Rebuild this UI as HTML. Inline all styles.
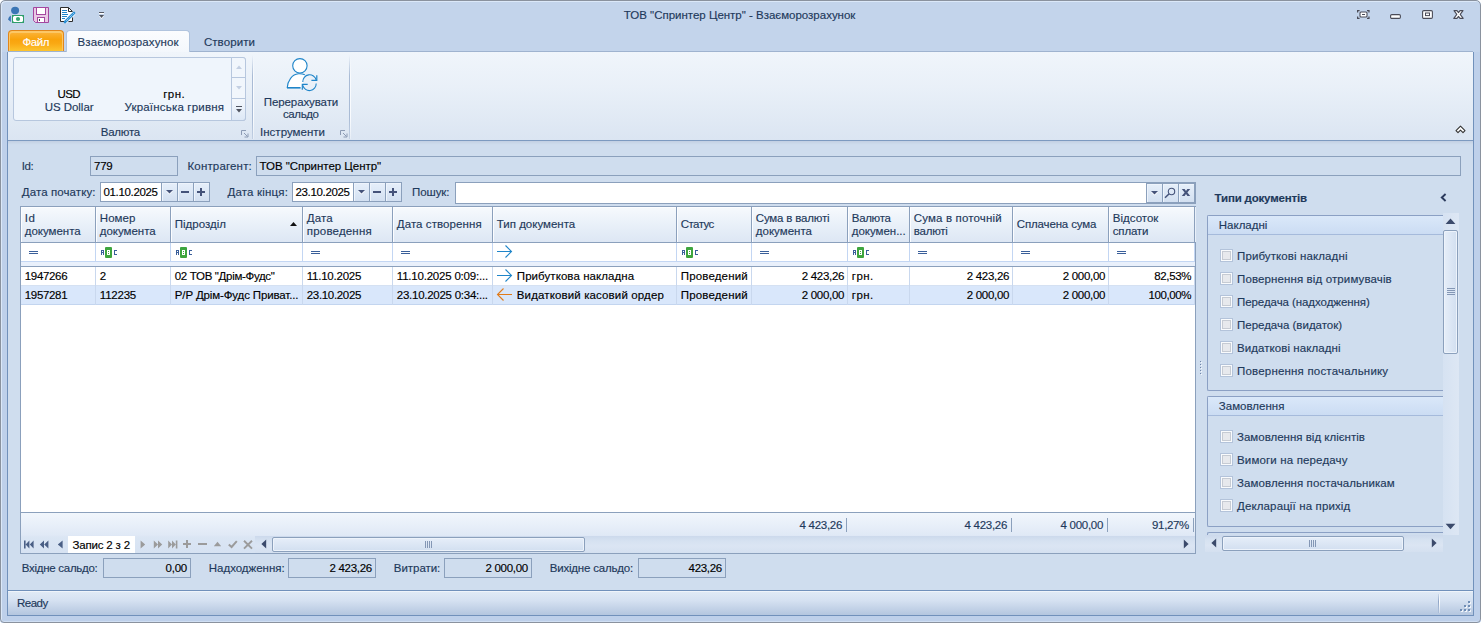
<!DOCTYPE html>
<html lang="uk">
<head>
<meta charset="utf-8">
<title>ТОВ "Спринтер Центр" - Взаєморозрахунок</title>
<style>
*{box-sizing:border-box;margin:0;padding:0}
html,body{width:1481px;height:623px;overflow:hidden;background:#fff}
body{font-family:"Liberation Sans",sans-serif;font-size:11.5px;color:#1e395b;position:relative;line-height:13px}
#win,#win div,#win svg{position:absolute}
#win svg{overflow:visible}
#win{left:0;top:0;width:1481px;height:623px;background:#c3d4eb;border-radius:5px 5px 4px 4px;overflow:hidden}
#frame{left:0;top:0;width:1481px;height:623px;border:1px solid #8a929e;border-radius:5px 5px 4px 4px;box-shadow:inset 1px 1px 0 #dbe8f8,inset 0 -1px 0 #d0dff3;z-index:50}
.t{white-space:nowrap;line-height:13px;-webkit-text-stroke:.15px currentColor}
.k{color:#000}
.b{font-weight:bold}
.box{border:1px solid #8ba0bc;background:#cfddee}
.inp{border:1px solid #8ba0bc;background:#fff}
.hd{background:linear-gradient(#f7fafd 0,#eaf1f9 45%,#dde7f4 100%);border-right:1px solid #8ba0bc;box-shadow:inset 1px 1px 0 #fcfdff}
.btn{background:linear-gradient(#e6effa,#d3e0f1);border-left:1px solid #8ba0bc;box-shadow:inset 1px 1px 0 #eef4fc}
.cb{width:13px;height:13px;border:1px solid #b3c3da;background:#e7e9ed;box-shadow:inset 0 0 0 1px #f9fbfd, inset 0 0 0 2px #c6cbd3}
.grp{border:1px solid #8ba0c4;background:#cfddee;border-radius:2px 0 0 2px}
.grph{background:linear-gradient(#dae8f9,#cbdcf3);border-bottom:1px solid #a5badb}
</style>
</head>
<body>
<div id="win">
<div class="t" style="top:9.0px;letter-spacing:-0.01px;left:623.8px;">ТОВ "Спринтер Центр" - Взаєморозрахунок</div>
<svg style="left:7px;top:6px;" width="18" height="18" viewBox="0 0 18 18"><ellipse cx="8.1" cy="4.5" rx="4" ry="3.7" fill="#3a75b5"/><path d="M3.9,9.6 V16 L1,13.4 Q1.6,10.6 3.9,9.6 Z" fill="#3a75b5"/><rect x="5.5" y="9.5" width="11" height="7" fill="#fff" stroke="#2e9e6b" stroke-width="1"/><path d="M5,9 h3 l-3,3z M17,9 h-3 l3,3z M5,17 h3 l-3,-3z M17,17 h-3 l3,-3z" fill="#2e9e6b"/><circle cx="11" cy="13" r="2.1" fill="#37a472"/></svg>
<svg style="left:33px;top:7px;" width="16" height="16" viewBox="0 0 16 16"><path d="M.5,.5 H15.5 V15.5 H2.5 L.5,13.5 Z" fill="#e9c9e5" stroke="#a4479f"/><rect x="3.5" y=".5" width="9" height="7" fill="#fff" stroke="#a4479f"/><rect x="4.5" y="10.5" width="7" height="5" fill="#fff" stroke="#a4479f"/><rect x="6" y="12" width="1" height="2" fill="#444"/></svg>
<svg style="left:60px;top:7px;" width="16" height="16" viewBox="0 0 16 16"><path d="M.5,.5 H8.5 L12.5,4.5 V14.5 H.5 Z" fill="#fff" stroke="#2d2d2d"/><path d="M8.5,.5 V4.5 H12.5" fill="none" stroke="#2d2d2d"/><path d="M2,3.5h5M2,5.5h5M2,7.5h6M2,9.5h5M2,11.5h3" stroke="#1f85c9" stroke-width="1"/><path d="M14,6 L5,15" stroke="#fff" stroke-width="4"/><path d="M14,6 L5,15" stroke="#2b8fd3" stroke-width="2.6" stroke-linecap="round"/><path d="M13.6,6.4 L6,14" stroke="#fff" stroke-width=".8" stroke-dasharray="1 1"/><path d="M4.2,15.8 l.4,-2 l1.6,1.6z" fill="#2b8fd3"/></svg>
<svg style="left:98px;top:11px;" width="8" height="9" viewBox="0 0 8 9"><path d="M1,2.5h5" stroke="#fff"/><path d="M1,1.5h5" stroke="#555a66"/><path d="M1,5 h5 l-2.5,3z" fill="#fff"/><path d="M1,4 h5 l-2.5,3z" fill="#4f5460"/></svg>
<svg style="left:1356px;top:9px;" width="15" height="11" viewBox="0 0 15 11"><path d="M1.6,3.6V1.6h2M11,1.6h2v2M13,7.4v2h-2M3.6,9.4h-2v-2" fill="none" stroke="#4a4b57" stroke-width="1.2"/><rect x="4" y="3" width="7" height="5" rx="1" fill="#fff" stroke="#4a4b57" stroke-width="1.1"/><path d="M6,5.5h3" stroke="#4a4b57" stroke-width="1"/></svg>
<svg style="left:1390px;top:14px;" width="11" height="5" viewBox="0 0 11 5"><rect x=".6" y=".6" width="9.8" height="3.8" rx="1.2" fill="#fff" stroke="#4a4b57" stroke-width="1.1"/></svg>
<svg style="left:1422px;top:10px;" width="11" height="9" viewBox="0 0 11 9"><rect x=".6" y=".6" width="9.8" height="7.8" rx="1.2" fill="#fff" stroke="#4a4b57" stroke-width="1.1"/><rect x="3.5" y="3" width="4" height="2.6" fill="#fff" stroke="#4a4b57" stroke-width="1"/></svg>
<svg style="left:1453px;top:10px;" width="11" height="9" viewBox="0 0 11 9"><path d="M1,.6 H4 L5.5,2.6 L7,.6 H10 L7.2,4.4 L10.2,8.4 H7 L5.5,6.4 L4,8.4 H.8 L3.8,4.4 Z" fill="#fff" stroke="#4a4b57" stroke-width="1.1" stroke-linejoin="round"/></svg>
<div style="left:8px;top:30px;width:56px;height:22px;border:1px solid #e1861a;border-bottom:none;border-radius:4px 4px 0 0;background:linear-gradient(#fbb540 0,#f9a30c 40%,#faa914 60%,#fdc832 100%);box-shadow:inset 0 1px 0 1px #fcc766"></div>
<div class="t" style="top:36.0px;letter-spacing:-0.40px;left:22.5px;color:#fff">Файл</div>
<div style="left:8px;top:51px;width:1465px;height:90px;border-top:1px solid #9fb3cf;border-bottom:1px solid #7d9ac0;background:linear-gradient(#f0f5fb 0,#e9f0f8 40%,#dbe5f2 100%)"></div>
<div style="left:66px;top:30px;width:124px;height:22px;border:1px solid #b1c4de;border-bottom:none;border-radius:4px 4px 0 0;background:linear-gradient(#fbfcfe,#f3f7fc)"></div>
<div class="t" style="top:36.0px;letter-spacing:0.09px;left:77.6px;">Взаєморозрахунок</div>
<div class="t" style="top:36.0px;letter-spacing:0.08px;left:203.9px;">Створити</div>
<div style="left:13px;top:57px;width:233px;height:64px;border:1px solid #b7c7de;border-radius:3px;background:#eff5fc"></div>
<div style="left:231px;top:57px;width:15px;height:64px;border:1px solid #b7c7de;border-radius:0 3px 3px 0;background:#f1f6fc"></div>
<div style="left:231px;top:77px;width:15px;height:1px;background:#b7c7de"></div>
<div style="left:231px;top:98px;width:15px;height:23px;border:1px solid #b7c7de;border-radius:0 0 3px 0;background:linear-gradient(#f4f8fd,#dde8f6)"></div>
<svg style="left:235px;top:64px;" width="8" height="6" viewBox="0 0 8 6"><path d="M1,5 h6 l-3,-3.5z" fill="#c3cfe2"/></svg>
<svg style="left:235px;top:85px;" width="8" height="6" viewBox="0 0 8 6"><path d="M1,1 h6 l-3,3.5z" fill="#c3cfe2"/></svg>
<svg style="left:235px;top:105px;" width="8" height="9" viewBox="0 0 8 9"><path d="M1,1.5h6" stroke="#4f5460"/><path d="M1,4 h6 l-3,3.5z" fill="#4f5460"/></svg>
<div class="t k" style="top:88.0px;letter-spacing:-0.60px;left:57.5px;">USD</div>
<div class="t" style="top:101.0px;letter-spacing:-0.04px;left:44.7px;">US Dollar</div>
<div class="t k" style="top:88.0px;letter-spacing:0.46px;left:163.2px;">грн.</div>
<div class="t" style="top:101.0px;letter-spacing:0.19px;left:124.5px;">Українська гривня</div>
<div class="t" style="top:126.0px;letter-spacing:-0.25px;left:100.8px;">Валюта</div>
<div style="left:252px;top:55px;width:1px;height:84px;background:linear-gradient(rgba(169,187,213,0),#a9bbd5 25%,#a9bbd5 75%,rgba(169,187,213,.5))"></div>
<div style="left:253px;top:55px;width:1px;height:84px;background:linear-gradient(rgba(255,255,255,0),#f9fbfe 25%,#f9fbfe 75%,rgba(255,255,255,.3))"></div>
<div style="left:349px;top:55px;width:1px;height:84px;background:linear-gradient(rgba(169,187,213,0),#a9bbd5 25%,#a9bbd5 75%,rgba(169,187,213,.5))"></div>
<div style="left:350px;top:55px;width:1px;height:84px;background:linear-gradient(rgba(255,255,255,0),#f9fbfe 25%,#f9fbfe 75%,rgba(255,255,255,.3))"></div>
<svg style="left:241px;top:130px;" width="8" height="8" viewBox="0 0 8 8"><path d="M.5,5V.5H5" fill="none" stroke="#8c9bb4"/><path d="M3,3 L6.5,6.5 M7,3.5 V7 H3.5" fill="none" stroke="#8c9bb4"/></svg>
<svg style="left:340px;top:130px;" width="8" height="8" viewBox="0 0 8 8"><path d="M.5,5V.5H5" fill="none" stroke="#8c9bb4"/><path d="M3,3 L6.5,6.5 M7,3.5 V7 H3.5" fill="none" stroke="#8c9bb4"/></svg>
<svg style="left:286px;top:58px;" width="32" height="32" viewBox="0 0 32 32"><path d="M1.2,30 C1.6,23 6,16.2 12.5,15.8 C15,15.6 17,16 18.8,16.8 L16,30 Z" fill="#fff"/><path d="M1.2,30 C1.6,23 6,16.2 12.5,15.8 C15,15.6 17,16 18.8,16.8" fill="none" stroke="#1f85c9" stroke-width="1.1"/><path d="M1,29.8 H14.6" stroke="#1f85c9" stroke-width="1.6"/><circle cx="13.9" cy="7.8" r="7.2" fill="#fff" stroke="#1f85c9" stroke-width="1.1"/><circle cx="23.5" cy="24.7" r="8.2" fill="#e6eef8" opacity=".0"/><path d="M16.8,24 A6.8,6.8 0 0 1 30.2,22" fill="none" stroke="#1f85c9" stroke-width="1.1"/><path d="M25.4,22.3 H30.8 V17.3" fill="none" stroke="#1f85c9" stroke-width="1.2"/><path d="M30.2,25.6 A6.8,6.8 0 0 1 16.8,27.4" fill="none" stroke="#1f85c9" stroke-width="1.1"/><path d="M21.7,26.4 H16.3 V31.8" fill="none" stroke="#1f85c9" stroke-width="1.2"/></svg>
<div class="t" style="top:96.0px;letter-spacing:-0.10px;left:263.8px;">Перерахувати</div>
<div class="t" style="top:108.0px;letter-spacing:-0.41px;left:283.0px;">сальдо</div>
<div class="t" style="top:126.0px;letter-spacing:0.02px;left:260.0px;">Інструменти</div>
<svg style="left:1455px;top:125px;" width="11" height="9" viewBox="0 0 11 9"><path d="M5.5,1.2 L10,5.6 L8,7.6 L5.5,5.2 L3,7.6 L1,5.6 Z" fill="#fff" stroke="#333" stroke-width="1.1" stroke-linejoin="round"/></svg>
<div style="left:8px;top:141px;width:1465px;height:449px;background:linear-gradient(#c2cfe2 0,#cddbec 3px,#cfddee 4px)"></div>
<div class="t" style="top:160.0px;letter-spacing:-0.47px;left:21.8px;">Id:</div>
<div class="box" style="left:90px;top:156px;width:88px;height:20px;"></div>
<div class="t k" style="top:160.0px;letter-spacing:-0.26px;left:94.0px;">779</div>
<div class="t" style="top:160.0px;letter-spacing:0.16px;left:187.5px;">Контрагент:</div>
<div class="box" style="left:256px;top:156px;width:1205px;height:20px;"></div>
<div class="t k" style="top:160.0px;letter-spacing:-0.03px;left:259.5px;">ТОВ "Спринтер Центр"</div>
<div class="t" style="top:186.0px;letter-spacing:0.10px;left:21.8px;">Дата початку:</div>
<div class="inp" style="left:100px;top:182px;width:110px;height:20px;"></div>
<div class="btn" style="left:161px;top:183px;width:16px;height:18px;"></div>
<div class="btn" style="left:177px;top:183px;width:16px;height:18px;"></div>
<div class="btn" style="left:193px;top:183px;width:16px;height:18px;"></div>
<svg style="left:165px;top:189px;" width="9" height="6" viewBox="0 0 9 6"><path d="M1,2 h7 l-3.5,3.6z" fill="#fff"/><path d="M1,1 h7 l-3.5,3.6z" fill="#45537a"/></svg>
<div style="left:181px;top:191px;width:8px;height:2px;background:#45537a"></div>
<div style="left:197px;top:191px;width:8px;height:2px;background:#45537a"></div>
<div style="left:200px;top:188px;width:2px;height:8px;background:#45537a"></div>
<div class="t k" style="top:186.0px;letter-spacing:-0.34px;left:103.5px;">01.10.2025</div>
<div class="t" style="top:186.0px;letter-spacing:0.18px;left:227.5px;">Дата кінця:</div>
<div class="inp" style="left:292px;top:182px;width:110px;height:20px;"></div>
<div class="btn" style="left:353px;top:183px;width:16px;height:18px;"></div>
<div class="btn" style="left:369px;top:183px;width:16px;height:18px;"></div>
<div class="btn" style="left:385px;top:183px;width:16px;height:18px;"></div>
<svg style="left:357px;top:189px;" width="9" height="6" viewBox="0 0 9 6"><path d="M1,2 h7 l-3.5,3.6z" fill="#fff"/><path d="M1,1 h7 l-3.5,3.6z" fill="#45537a"/></svg>
<div style="left:373px;top:191px;width:8px;height:2px;background:#45537a"></div>
<div style="left:389px;top:191px;width:8px;height:2px;background:#45537a"></div>
<div style="left:392px;top:188px;width:2px;height:8px;background:#45537a"></div>
<div class="t k" style="top:186.0px;letter-spacing:-0.34px;left:295.5px;">23.10.2025</div>
<div class="t" style="top:186.0px;letter-spacing:-0.10px;left:412.1px;">Пошук:</div>
<div class="inp" style="left:455px;top:182px;width:741px;height:22px;"></div>
<div style="left:1146px;top:183px;width:49px;height:20px;border:1px solid #8ba0bc;border-left:none"></div>
<div class="btn" style="left:1146px;top:184px;width:16px;height:18px;"></div>
<div class="btn" style="left:1162px;top:184px;width:16px;height:18px;"></div>
<div class="btn" style="left:1178px;top:184px;width:16px;height:18px;"></div>
<svg style="left:1150px;top:190px;" width="9" height="6" viewBox="0 0 9 6"><path d="M1,2 h7 l-3.5,3.6z" fill="#fff"/><path d="M1,1 h7 l-3.5,3.6z" fill="#45537a"/></svg>
<svg style="left:1163px;top:186px;" width="14" height="14" viewBox="0 0 14 14"><circle cx="8.5" cy="5.5" r="3.2" fill="none" stroke="#45537a" stroke-width="1.1"/><path d="M6.2,7.8 L2,11.8" stroke="#45537a" stroke-width="1.5"/></svg>
<svg style="left:1181px;top:189px;" width="10" height="7" viewBox="0 0 10 7"><path d="M.8,0 H3.6 L5,1.9 L6.4,0 H9.2 L6.4,3.5 L9.2,7 H6.4 L5,5.1 L3.6,7 H.8 L3.6,3.5 Z" fill="#45537a"/></svg>
<div style="left:20px;top:206px;width:1176px;height:348px;border:1px solid #8ba0bc;background:#fff"></div>
<div class="hd" style="left:21px;top:207px;width:75px;height:35px;"></div>
<div class="t" style="top:212.0px;letter-spacing:0.40px;left:24.8px;">Id</div>
<div class="t" style="top:225.0px;letter-spacing:-0.02px;left:24.8px;">документа</div>
<div class="hd" style="left:96px;top:207px;width:75px;height:35px;"></div>
<div class="t" style="top:212.0px;letter-spacing:0.06px;left:99.8px;">Номер</div>
<div class="t" style="top:225.0px;letter-spacing:-0.02px;left:99.8px;">документа</div>
<div class="hd" style="left:171px;top:207px;width:132px;height:35px;"></div>
<div class="t" style="top:218.0px;left:174.8px;">Підрозділ</div>
<div class="hd" style="left:303px;top:207px;width:90px;height:35px;"></div>
<div class="t" style="top:212.0px;letter-spacing:0.11px;left:306.8px;">Дата</div>
<div class="t" style="top:225.0px;letter-spacing:0.19px;left:306.8px;">проведення</div>
<div class="hd" style="left:393px;top:207px;width:100px;height:35px;"></div>
<div class="t" style="top:218.0px;letter-spacing:0.08px;left:396.8px;">Дата створення</div>
<div class="hd" style="left:493px;top:207px;width:184px;height:35px;"></div>
<div class="t" style="top:218.0px;left:496.8px;">Тип документа</div>
<div class="hd" style="left:677px;top:207px;width:75px;height:35px;"></div>
<div class="t" style="top:218.0px;letter-spacing:-0.58px;left:680.8px;">Статус</div>
<div class="hd" style="left:752px;top:207px;width:96px;height:35px;"></div>
<div class="t" style="top:212.0px;letter-spacing:-0.19px;left:755.8px;">Сума в валюті</div>
<div class="t" style="top:225.0px;letter-spacing:0.01px;left:755.8px;">документа</div>
<div class="hd" style="left:848px;top:207px;width:62px;height:35px;"></div>
<div class="t" style="top:212.0px;letter-spacing:-0.33px;left:851.8px;">Валюта</div>
<div class="t" style="top:225.0px;letter-spacing:-0.02px;left:851.8px;">докумен...</div>
<div class="hd" style="left:910px;top:207px;width:103px;height:35px;"></div>
<div class="t" style="top:212.0px;letter-spacing:0.15px;left:913.8px;">Сума в поточній</div>
<div class="t" style="top:225.0px;letter-spacing:-0.23px;left:913.8px;">валюті</div>
<div class="hd" style="left:1013px;top:207px;width:96px;height:35px;"></div>
<div class="t" style="top:218.0px;letter-spacing:-0.15px;left:1016.8px;">Сплачена сума</div>
<div class="hd" style="left:1109px;top:207px;width:86px;height:35px;"></div>
<div class="t" style="top:212.0px;letter-spacing:0.01px;left:1112.8px;">Відсоток</div>
<div class="t" style="top:225.0px;letter-spacing:-0.19px;left:1112.8px;">сплати</div>
<div style="left:1195px;top:207px;width:1px;height:35px;background:#e9f0f9"></div>
<div style="left:21px;top:242px;width:1174px;height:1px;background:#8ba0bc"></div>
<svg style="left:289px;top:221px;" width="9" height="6" viewBox="0 0 9 6"><path d="M1,5 h7 l-3.5,-4z" fill="#111"/></svg>
<div style="left:21px;top:261px;width:1174px;height:1px;background:#c3d6f3"></div>
<div style="left:21px;top:262px;width:1174px;height:4px;background:#e9f0fb"></div>
<div style="left:21px;top:266px;width:1174px;height:1px;background:#8ba0bc"></div>
<div style="left:21px;top:285px;width:1174px;height:1px;background:#d5e1f2"></div>
<div style="left:21px;top:286px;width:1174px;height:18px;background:#d9e7fb"></div>
<div style="left:21px;top:304px;width:1174px;height:1px;background:#c3d5ef"></div>
<div style="left:95px;top:243px;width:1px;height:18px;background:#c3d6f3"></div>
<div style="left:95px;top:267px;width:1px;height:38px;background:#c9d8ee"></div>
<div style="left:170px;top:243px;width:1px;height:18px;background:#c3d6f3"></div>
<div style="left:170px;top:267px;width:1px;height:38px;background:#c9d8ee"></div>
<div style="left:302px;top:243px;width:1px;height:18px;background:#c3d6f3"></div>
<div style="left:302px;top:267px;width:1px;height:38px;background:#c9d8ee"></div>
<div style="left:392px;top:243px;width:1px;height:18px;background:#c3d6f3"></div>
<div style="left:392px;top:267px;width:1px;height:38px;background:#c9d8ee"></div>
<div style="left:492px;top:243px;width:1px;height:18px;background:#c3d6f3"></div>
<div style="left:492px;top:267px;width:1px;height:38px;background:#c9d8ee"></div>
<div style="left:676px;top:243px;width:1px;height:18px;background:#c3d6f3"></div>
<div style="left:676px;top:267px;width:1px;height:38px;background:#c9d8ee"></div>
<div style="left:751px;top:243px;width:1px;height:18px;background:#c3d6f3"></div>
<div style="left:751px;top:267px;width:1px;height:38px;background:#c9d8ee"></div>
<div style="left:847px;top:243px;width:1px;height:18px;background:#c3d6f3"></div>
<div style="left:847px;top:267px;width:1px;height:38px;background:#c9d8ee"></div>
<div style="left:909px;top:243px;width:1px;height:18px;background:#c3d6f3"></div>
<div style="left:909px;top:267px;width:1px;height:38px;background:#c9d8ee"></div>
<div style="left:1012px;top:243px;width:1px;height:18px;background:#c3d6f3"></div>
<div style="left:1012px;top:267px;width:1px;height:38px;background:#c9d8ee"></div>
<div style="left:1108px;top:243px;width:1px;height:18px;background:#c3d6f3"></div>
<div style="left:1108px;top:267px;width:1px;height:38px;background:#c9d8ee"></div>
<div style="left:1194px;top:243px;width:1px;height:18px;background:#c3d6f3"></div>
<div style="left:1194px;top:267px;width:1px;height:38px;background:#c9d8ee"></div>
<div style="left:29px;top:251px;width:9px;height:1px;background:#3a5f9a"></div>
<div style="left:29px;top:253px;width:9px;height:1px;background:#3a5f9a"></div>
<div style="left:311px;top:251px;width:9px;height:1px;background:#3a5f9a"></div>
<div style="left:311px;top:253px;width:9px;height:1px;background:#3a5f9a"></div>
<div style="left:401px;top:251px;width:9px;height:1px;background:#3a5f9a"></div>
<div style="left:401px;top:253px;width:9px;height:1px;background:#3a5f9a"></div>
<div style="left:760px;top:251px;width:9px;height:1px;background:#3a5f9a"></div>
<div style="left:760px;top:253px;width:9px;height:1px;background:#3a5f9a"></div>
<div style="left:918px;top:251px;width:9px;height:1px;background:#3a5f9a"></div>
<div style="left:918px;top:253px;width:9px;height:1px;background:#3a5f9a"></div>
<div style="left:1021px;top:251px;width:9px;height:1px;background:#3a5f9a"></div>
<div style="left:1021px;top:253px;width:9px;height:1px;background:#3a5f9a"></div>
<div style="left:1117px;top:251px;width:9px;height:1px;background:#3a5f9a"></div>
<div style="left:1117px;top:253px;width:9px;height:1px;background:#3a5f9a"></div>
<svg style="left:101px;top:247px;" width="16" height="11" viewBox="0 0 16 11"><rect x="4" y="0" width="7" height="11" rx="1" fill="#3ea53e"/><path d="M.5,8V3.5H2.5V8M.5,5.5H2.5" fill="none" stroke="#3a5f9a" stroke-width="1" shape-rendering="crispEdges"/><path d="M6.5,3.5h2v4h-2zM6.5,5.5h2" fill="none" stroke="#fff" stroke-width="1" shape-rendering="crispEdges"/><path d="M16,3.5 H13.5 V7.5 H16" fill="none" stroke="#3a5f9a" stroke-width="1" shape-rendering="crispEdges"/></svg>
<svg style="left:176px;top:247px;" width="16" height="11" viewBox="0 0 16 11"><rect x="4" y="0" width="7" height="11" rx="1" fill="#3ea53e"/><path d="M.5,8V3.5H2.5V8M.5,5.5H2.5" fill="none" stroke="#3a5f9a" stroke-width="1" shape-rendering="crispEdges"/><path d="M6.5,3.5h2v4h-2zM6.5,5.5h2" fill="none" stroke="#fff" stroke-width="1" shape-rendering="crispEdges"/><path d="M16,3.5 H13.5 V7.5 H16" fill="none" stroke="#3a5f9a" stroke-width="1" shape-rendering="crispEdges"/></svg>
<svg style="left:682px;top:247px;" width="16" height="11" viewBox="0 0 16 11"><rect x="4" y="0" width="7" height="11" rx="1" fill="#3ea53e"/><path d="M.5,8V3.5H2.5V8M.5,5.5H2.5" fill="none" stroke="#3a5f9a" stroke-width="1" shape-rendering="crispEdges"/><path d="M6.5,3.5h2v4h-2zM6.5,5.5h2" fill="none" stroke="#fff" stroke-width="1" shape-rendering="crispEdges"/><path d="M16,3.5 H13.5 V7.5 H16" fill="none" stroke="#3a5f9a" stroke-width="1" shape-rendering="crispEdges"/></svg>
<svg style="left:853px;top:247px;" width="16" height="11" viewBox="0 0 16 11"><rect x="4" y="0" width="7" height="11" rx="1" fill="#3ea53e"/><path d="M.5,8V3.5H2.5V8M.5,5.5H2.5" fill="none" stroke="#3a5f9a" stroke-width="1" shape-rendering="crispEdges"/><path d="M6.5,3.5h2v4h-2zM6.5,5.5h2" fill="none" stroke="#fff" stroke-width="1" shape-rendering="crispEdges"/><path d="M16,3.5 H13.5 V7.5 H16" fill="none" stroke="#3a5f9a" stroke-width="1" shape-rendering="crispEdges"/></svg>
<svg style="left:497px;top:245.0px;" width="15" height="13" viewBox="0 0 15 13"><path d="M0,6.5 H14.5 M8.5,.5 L14.5,6.5 L8.5,12.5" fill="none" stroke="#1f85c9" stroke-width="1.1"/></svg>
<svg style="left:497px;top:269.0px;" width="15" height="13" viewBox="0 0 15 13"><path d="M0,6.5 H14.5 M8.5,.5 L14.5,6.5 L8.5,12.5" fill="none" stroke="#1f85c9" stroke-width="1.1"/></svg>
<svg style="left:497px;top:288.0px;" width="15" height="13" viewBox="0 0 15 13"><path d="M.5,6.5 H15 M6.5,.5 L.5,6.5 L6.5,12.5" fill="none" stroke="#e07b1a" stroke-width="1.1"/></svg>
<div class="t k" style="top:270.0px;letter-spacing:-0.34px;left:24.8px;">1947266</div>
<div class="t k" style="top:270.0px;letter-spacing:-0.01px;left:99.8px;">2</div>
<div class="t k" style="top:270.0px;letter-spacing:-0.32px;left:174.8px;">02 ТОВ "Дрім-Фудс"</div>
<div class="t k" style="top:270.0px;letter-spacing:-0.24px;left:306.8px;">11.10.2025</div>
<div class="t k" style="top:270.0px;letter-spacing:-0.21px;left:396.8px;">11.10.2025 0:09:...</div>
<div class="t k" style="top:270.0px;letter-spacing:0.07px;left:516.8px;">Прибуткова накладна</div>
<div class="t k" style="top:270.0px;letter-spacing:0.15px;left:680.8px;">Проведений</div>
<div class="t k" style="top:270.0px;letter-spacing:-0.28px;left:801.7px;">2 423,26</div>
<div class="t k" style="top:270.0px;letter-spacing:0.41px;left:851.8px;">грн.</div>
<div class="t k" style="top:270.0px;letter-spacing:-0.28px;left:966.7px;">2 423,26</div>
<div class="t k" style="top:270.0px;letter-spacing:-0.28px;left:1062.7px;">2 000,00</div>
<div class="t k" style="top:270.0px;letter-spacing:-0.37px;left:1154.3px;">82,53%</div>
<div class="t k" style="top:289.0px;letter-spacing:-0.34px;left:24.8px;">1957281</div>
<div class="t k" style="top:289.0px;letter-spacing:-0.21px;left:99.8px;">112235</div>
<div class="t k" style="top:289.0px;letter-spacing:-0.14px;left:174.8px;">Р/Р Дрім-Фудс Приват...</div>
<div class="t k" style="top:289.0px;letter-spacing:-0.33px;left:306.8px;">23.10.2025</div>
<div class="t k" style="top:289.0px;letter-spacing:-0.26px;left:396.8px;">23.10.2025 0:34:...</div>
<div class="t k" style="top:289.0px;letter-spacing:0.13px;left:516.8px;">Видатковий касовий ордер</div>
<div class="t k" style="top:289.0px;letter-spacing:0.15px;left:680.8px;">Проведений</div>
<div class="t k" style="top:289.0px;letter-spacing:-0.28px;left:801.7px;">2 000,00</div>
<div class="t k" style="top:289.0px;letter-spacing:0.41px;left:851.8px;">грн.</div>
<div class="t k" style="top:289.0px;letter-spacing:-0.28px;left:966.7px;">2 000,00</div>
<div class="t k" style="top:289.0px;letter-spacing:-0.28px;left:1062.7px;">2 000,00</div>
<div class="t k" style="top:289.0px;letter-spacing:-0.40px;left:1148.5px;">100,00%</div>
<div style="left:21px;top:512px;width:1174px;height:1px;background:#8ba0bc"></div>
<div style="left:21px;top:513px;width:1174px;height:40px;background:linear-gradient(#f1f6fc 0,#e0e9f6 22px,#dbe6f4 24px,#d6e2f2 100%)"></div>
<div style="left:846px;top:518px;width:1px;height:14px;background:#8ba0bc"></div>
<div class="t" style="top:519.0px;letter-spacing:-0.28px;left:799.5px;">4 423,26</div>
<div style="left:1011px;top:518px;width:1px;height:14px;background:#8ba0bc"></div>
<div class="t" style="top:519.0px;letter-spacing:-0.28px;left:964.5px;">4 423,26</div>
<div style="left:1107px;top:518px;width:1px;height:14px;background:#8ba0bc"></div>
<div class="t" style="top:519.0px;letter-spacing:-0.28px;left:1060.5px;">4 000,00</div>
<div style="left:1193px;top:518px;width:1px;height:14px;background:#8ba0bc"></div>
<div class="t" style="top:519.0px;letter-spacing:-0.37px;left:1152.1px;">91,27%</div>
<div style="left:68px;top:536px;width:67px;height:17px;background:#fff"></div>
<div class="t k" style="top:539.0px;letter-spacing:-0.18px;left:72.5px;">Запис 2 з 2</div>
<svg style="left:24px;top:540px;" width="10" height="9" viewBox="0 0 10 9"><path d="M0,.5h1.6v8H0z M5.4,.5 V8.5 L1.6,4.5z M9.6,.5 V8.5 L5.8,4.5z" fill="#4a5f85"/></svg>
<svg style="left:39px;top:540px;" width="10" height="9" viewBox="0 0 10 9"><path d="M5,.5 V8.5 L.8,4.5z M9.4,.5 V8.5 L5.2,4.5z" fill="#4a5f85"/></svg>
<svg style="left:57px;top:540px;" width="6" height="9" viewBox="0 0 6 9"><path d="M5.6,.5 V8.5 L.8,4.5z" fill="#4a5f85"/></svg>
<svg style="left:140px;top:540px;" width="6" height="9" viewBox="0 0 6 9"><path d="M.6,.5 V8.5 L5.2,4.5z" fill="#9b9b9b"/></svg>
<svg style="left:153px;top:540px;" width="10" height="9" viewBox="0 0 10 9"><path d="M.8,.5 V8.5 L5,4.5z M5,.5 V8.5 L9.2,4.5z" fill="#9b9b9b"/></svg>
<svg style="left:168px;top:540px;" width="10" height="9" viewBox="0 0 10 9"><path d="M.2,.5 V8.5 L4,4.5z M4,.5 V8.5 L7.8,4.5z M7.8,.5h1.6v8H7.8z" fill="#9b9b9b"/></svg>
<div style="left:183px;top:543px;width:8px;height:2px;background:#9b9b9b"></div>
<div style="left:186px;top:540px;width:2px;height:8px;background:#9b9b9b"></div>
<div style="left:198px;top:543px;width:9px;height:2px;background:#9b9b9b"></div>
<svg style="left:213px;top:541px;" width="9" height="6" viewBox="0 0 9 6"><path d="M.8,5.2 h7.4 l-3.7,-4.4z" fill="#9b9b9b"/></svg>
<svg style="left:228px;top:540px;" width="10" height="9" viewBox="0 0 10 9"><path d="M.8,4.5 L3.6,7 L8.8,1.2" fill="none" stroke="#9b9b9b" stroke-width="2"/></svg>
<svg style="left:243px;top:540px;" width="10" height="9" viewBox="0 0 10 9"><path d="M1,.8 L9,8.6 M9,.8 L1,8.6" fill="none" stroke="#9b9b9b" stroke-width="1.9"/></svg>
<div style="left:255px;top:536px;width:940px;height:17px;background:linear-gradient(#ccd9ec 0,#d6e2f1 30%,#dbe5f3 60%,#d4e0f0 100%)"></div>
<div style="left:272px;top:537px;width:313px;height:15px;border:1px solid #8ba0bc;border-radius:2px;background:linear-gradient(#e6eef9,#d2dff0);box-shadow:inset 0 0 0 1px #edf3fb"></div>
<svg style="left:261px;top:539px;" width="6" height="10" viewBox="0 0 6 10"><path d="M5.2,.4 V9.6 L.4,5z" fill="#3b4a6b"/></svg>
<svg style="left:1183px;top:539px;" width="6" height="10" viewBox="0 0 6 10"><path d="M.8,.4 V9.6 L5.6,5z" fill="#3b4a6b"/></svg>
<div style="left:425px;top:541px;width:1px;height:7px;background:#8497b5"></div>
<div style="left:427px;top:541px;width:1px;height:7px;background:#8497b5"></div>
<div style="left:429px;top:541px;width:1px;height:7px;background:#8497b5"></div>
<div style="left:431px;top:541px;width:1px;height:7px;background:#8497b5"></div>
<div class="t" style="top:562.0px;letter-spacing:-0.28px;left:21.8px;">Вхідне сальдо:</div>
<div class="box" style="left:103px;top:558px;width:88px;height:20px;"></div>
<div class="t k" style="top:562.0px;letter-spacing:-0.22px;left:165.5px;">0,00</div>
<div class="t" style="top:562.0px;letter-spacing:-0.02px;left:208.8px;">Надходження:</div>
<div class="box" style="left:288px;top:558px;width:88px;height:20px;"></div>
<div class="t k" style="top:562.0px;letter-spacing:-0.30px;left:329.5px;">2 423,26</div>
<div class="t" style="top:562.0px;letter-spacing:-0.04px;left:393.8px;">Витрати:</div>
<div class="box" style="left:444px;top:558px;width:88px;height:20px;"></div>
<div class="t k" style="top:562.0px;letter-spacing:-0.28px;left:485.4px;">2 000,00</div>
<div class="t" style="top:562.0px;letter-spacing:-0.19px;left:549.7px;">Вихідне сальдо:</div>
<div class="box" style="left:638px;top:558px;width:88px;height:20px;"></div>
<div class="t k" style="top:562.0px;letter-spacing:-0.31px;left:688.6px;">423,26</div>
<div style="left:1200px;top:361px;width:1px;height:1px;background:#7186a8"></div>
<div style="left:1201px;top:362px;width:1px;height:1px;background:#f4f8fd"></div>
<div style="left:1200px;top:364px;width:1px;height:1px;background:#7186a8"></div>
<div style="left:1201px;top:365px;width:1px;height:1px;background:#f4f8fd"></div>
<div style="left:1200px;top:367px;width:1px;height:1px;background:#7186a8"></div>
<div style="left:1201px;top:368px;width:1px;height:1px;background:#f4f8fd"></div>
<div style="left:1200px;top:370px;width:1px;height:1px;background:#7186a8"></div>
<div style="left:1201px;top:371px;width:1px;height:1px;background:#f4f8fd"></div>
<div style="left:1200px;top:373px;width:1px;height:1px;background:#7186a8"></div>
<div style="left:1201px;top:374px;width:1px;height:1px;background:#f4f8fd"></div>
<div class="t b" style="top:192.0px;letter-spacing:-0.18px;left:1214.6px;">Типи документів</div>
<svg style="left:1440px;top:193px;" width="7" height="9" viewBox="0 0 7 9"><path d="M5.6,1 L1.8,4.5 L5.6,8" fill="none" stroke="#2b3a5c" stroke-width="1.9"/></svg>
<div class="grp" style="left:1207px;top:215px;width:236px;height:176px;border-right:none"></div>
<div class="grph" style="left:1208px;top:216px;width:235px;height:19px;"></div>
<div class="t" style="top:219.0px;left:1218.8px;">Накладні</div>
<div class="cb" style="left:1220px;top:249px;width:13px;height:13px;"></div>
<div class="t" style="top:250.0px;letter-spacing:0.11px;left:1237.0px;">Прибуткові накладні</div>
<div class="cb" style="left:1220px;top:272px;width:13px;height:13px;"></div>
<div class="t" style="top:273.0px;letter-spacing:0.12px;left:1237.0px;">Повернення від отримувачів</div>
<div class="cb" style="left:1220px;top:295px;width:13px;height:13px;"></div>
<div class="t" style="top:296.0px;letter-spacing:-0.07px;left:1237.0px;">Передача (надходження)</div>
<div class="cb" style="left:1220px;top:318px;width:13px;height:13px;"></div>
<div class="t" style="top:319.0px;letter-spacing:-0.01px;left:1237.0px;">Передача (видаток)</div>
<div class="cb" style="left:1220px;top:341px;width:13px;height:13px;"></div>
<div class="t" style="top:342.0px;letter-spacing:0.07px;left:1237.0px;">Видаткові накладні</div>
<div class="cb" style="left:1220px;top:364px;width:13px;height:13px;"></div>
<div class="t" style="top:365.0px;letter-spacing:0.19px;left:1237.0px;">Повернення постачальнику</div>
<div class="grp" style="left:1207px;top:396px;width:236px;height:131px;border-right:none"></div>
<div class="grph" style="left:1208px;top:397px;width:235px;height:19px;"></div>
<div class="t" style="top:400.0px;letter-spacing:0.01px;left:1218.8px;">Замовлення</div>
<div class="cb" style="left:1220px;top:430px;width:13px;height:13px;"></div>
<div class="t" style="top:431.0px;left:1237.0px;">Замовлення від клієнтів</div>
<div class="cb" style="left:1220px;top:453px;width:13px;height:13px;"></div>
<div class="t" style="top:454.0px;letter-spacing:0.15px;left:1237.0px;">Вимоги на передачу</div>
<div class="cb" style="left:1220px;top:476px;width:13px;height:13px;"></div>
<div class="t" style="top:477.0px;letter-spacing:0.08px;left:1237.0px;">Замовлення постачальникам</div>
<div class="cb" style="left:1220px;top:499px;width:13px;height:13px;"></div>
<div class="t" style="top:500.0px;letter-spacing:0.13px;left:1237.0px;">Декларації на прихід</div>
<div class="grp" style="left:1207px;top:532px;width:236px;height:10px;border-right:none"></div>
<div style="left:1443px;top:213px;width:16px;height:322px;background:linear-gradient(90deg,#d6e2f2,#dde7f4)"></div>
<div style="left:1443px;top:230px;width:15px;height:124px;border:1px solid #8ba0bc;border-radius:2px;background:linear-gradient(90deg,#e6eef9,#d2dff0);box-shadow:inset 0 0 0 1px #edf3fb"></div>
<svg style="left:1445px;top:218px;" width="11" height="7" viewBox="0 0 11 7"><path d="M.6,6 h9.8 l-4.9,-5.4z" fill="#3b4a6b"/></svg>
<svg style="left:1445px;top:523px;" width="11" height="7" viewBox="0 0 11 7"><path d="M.6,.8 h9.8 l-4.9,5.4z" fill="#3b4a6b"/></svg>
<div style="left:1447px;top:288px;width:8px;height:1px;background:#8497b5"></div>
<div style="left:1447px;top:290px;width:8px;height:1px;background:#8497b5"></div>
<div style="left:1447px;top:292px;width:8px;height:1px;background:#8497b5"></div>
<div style="left:1447px;top:294px;width:8px;height:1px;background:#8497b5"></div>
<div style="left:1205px;top:535px;width:238px;height:17px;background:linear-gradient(#ccd9ec 0,#d6e2f1 30%,#dbe5f3 60%,#d4e0f0 100%)"></div>
<div style="left:1222px;top:536px;width:182px;height:15px;border:1px solid #8ba0bc;border-radius:2px;background:linear-gradient(#e6eef9,#d2dff0);box-shadow:inset 0 0 0 1px #edf3fb"></div>
<svg style="left:1211px;top:538px;" width="6" height="10" viewBox="0 0 6 10"><path d="M5.2,.4 V9.6 L.4,5z" fill="#3b4a6b"/></svg>
<svg style="left:1431px;top:538px;" width="6" height="10" viewBox="0 0 6 10"><path d="M.8,.4 V9.6 L5.6,5z" fill="#3b4a6b"/></svg>
<div style="left:1309px;top:540px;width:1px;height:7px;background:#8497b5"></div>
<div style="left:1311px;top:540px;width:1px;height:7px;background:#8497b5"></div>
<div style="left:1313px;top:540px;width:1px;height:7px;background:#8497b5"></div>
<div style="left:1315px;top:540px;width:1px;height:7px;background:#8497b5"></div>
<div style="left:1443px;top:535px;width:30px;height:55px;background:#cfddee"></div>
<div style="left:1205px;top:552px;width:238px;height:38px;background:#cfddee"></div>
<div style="left:8px;top:590px;width:1465px;height:1px;background:#7191bb"></div>
<div style="left:8px;top:591px;width:1465px;height:24px;background:linear-gradient(#fff 0,#e0eaf6 1px,#d5e1f1 40%,#b4c6df 100%)"></div>
<div style="left:8px;top:615px;width:1465px;height:1px;background:#7191bb"></div>
<div class="t" style="top:597.0px;letter-spacing:-0.53px;left:17.1px;">Ready</div>
<div style="left:1438px;top:594px;width:1px;height:19px;background:linear-gradient(rgba(143,165,198,.2),#8fa5c6 40%,rgba(143,165,198,.3))"></div>
<div style="left:1439px;top:594px;width:1px;height:19px;background:linear-gradient(rgba(255,255,255,.3),#fff 40%,rgba(255,255,255,.3))"></div>
<div style="left:1469px;top:602px;width:2px;height:2px;background:#f2f6fb"></div>
<div style="left:1468px;top:601px;width:2px;height:2px;background:#6f8db5"></div>
<div style="left:1465px;top:606px;width:2px;height:2px;background:#f2f6fb"></div>
<div style="left:1464px;top:605px;width:2px;height:2px;background:#6f8db5"></div>
<div style="left:1469px;top:606px;width:2px;height:2px;background:#f2f6fb"></div>
<div style="left:1468px;top:605px;width:2px;height:2px;background:#6f8db5"></div>
<div style="left:1461px;top:610px;width:2px;height:2px;background:#f2f6fb"></div>
<div style="left:1460px;top:609px;width:2px;height:2px;background:#6f8db5"></div>
<div style="left:1465px;top:610px;width:2px;height:2px;background:#f2f6fb"></div>
<div style="left:1464px;top:609px;width:2px;height:2px;background:#6f8db5"></div>
<div style="left:1469px;top:610px;width:2px;height:2px;background:#f2f6fb"></div>
<div style="left:1468px;top:609px;width:2px;height:2px;background:#6f8db5"></div>
<div style="left:0px;top:52px;width:7px;height:571px;background:#bed0ea"></div>
<div style="left:1474px;top:52px;width:7px;height:571px;background:#bed0ea"></div>
<div style="left:0px;top:616px;width:1481px;height:7px;background:#bed0ea"></div>
<div style="left:7px;top:52px;width:1px;height:564px;background:#7191bb"></div>
<div style="left:1473px;top:52px;width:1px;height:564px;background:#7191bb"></div>
<div id="frame"></div>
</div>
</body>
</html>
